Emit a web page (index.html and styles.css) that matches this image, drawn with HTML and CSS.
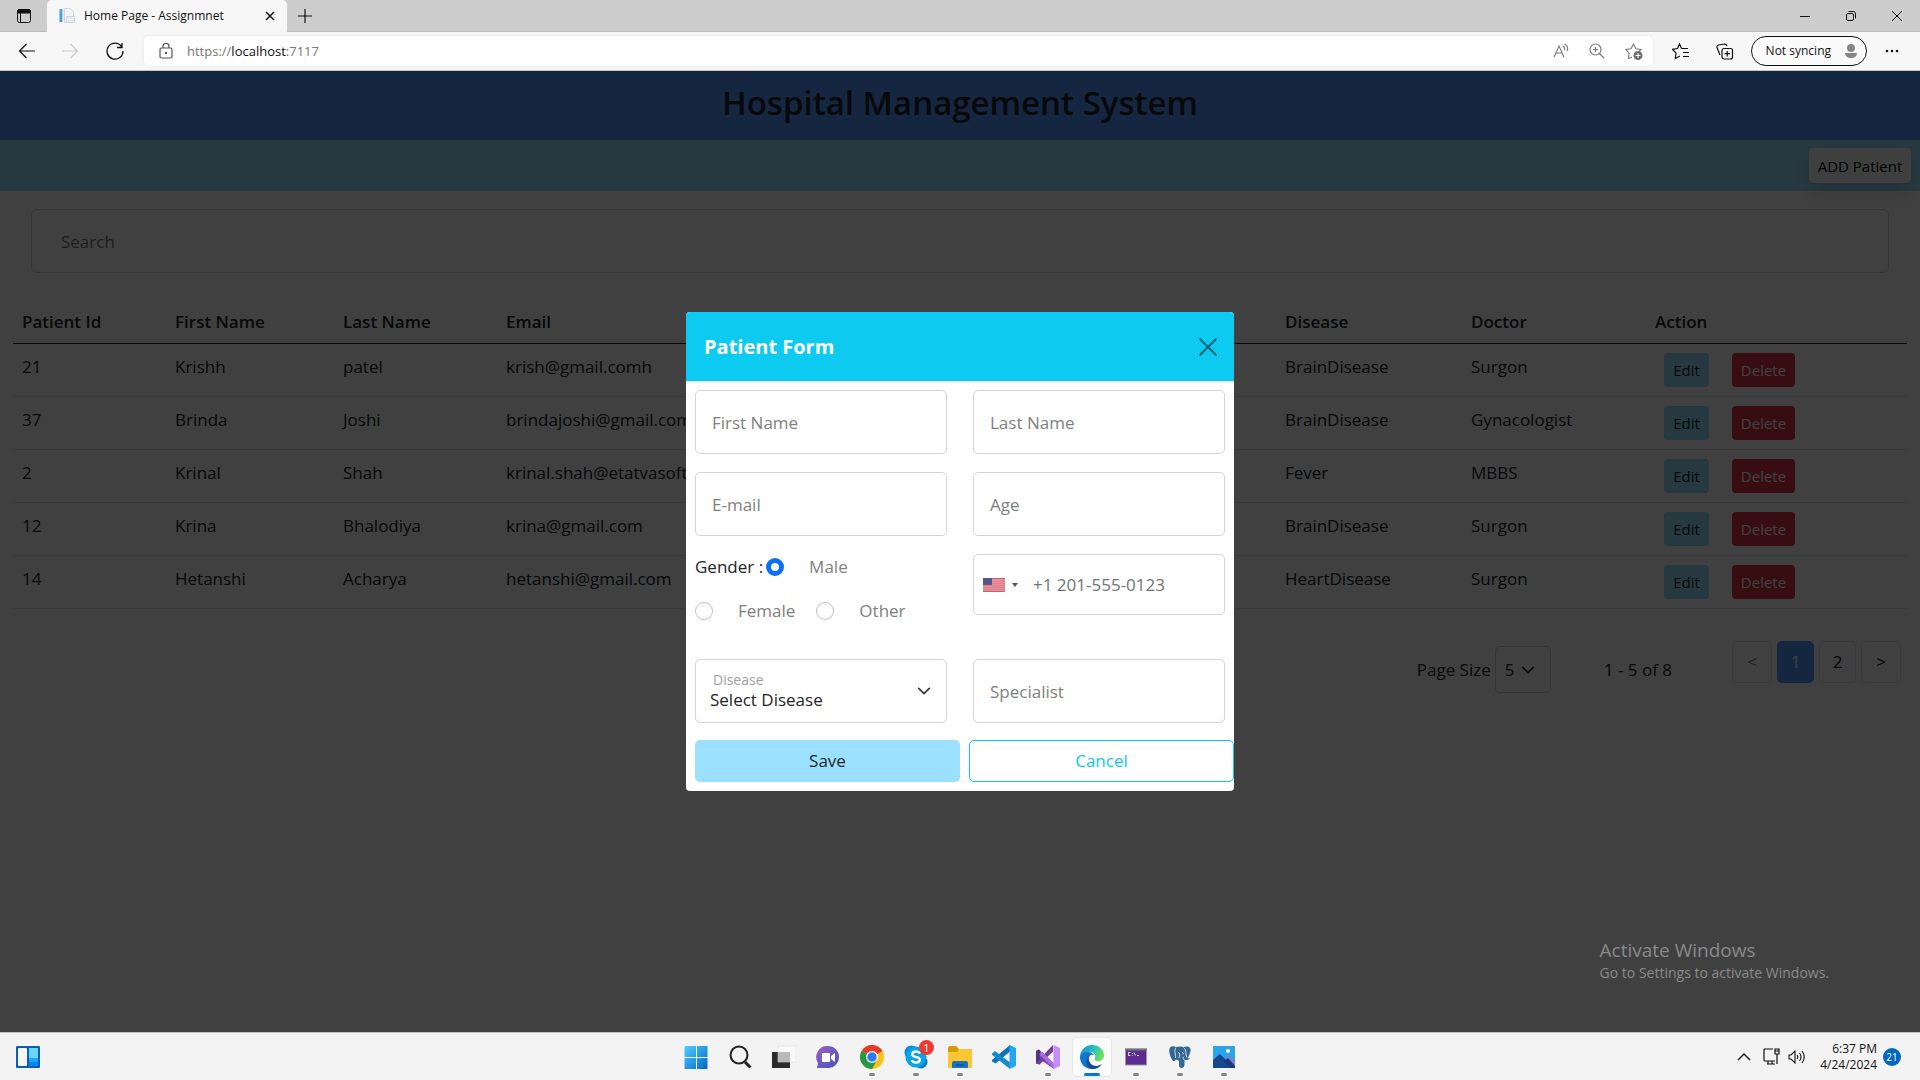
FILE: index.html
```html
<!DOCTYPE html>
<html lang="en">
<head>
<meta charset="utf-8">
<meta name="viewport" content="width=device-width, initial-scale=1">
<title>Home Page - Assignmnet</title>
<link rel="stylesheet" href="styles.css">
</head>
<body>
<header class="browser">
  <div class="tabstrip">
    <button class="icon-btn tab-menu" aria-label="Tab actions">
      <svg width="16" height="16" viewBox="0 0 16 16" fill="none" stroke="#111"><rect x="1.5" y="1.500" width="13" height="13" rx="2"/><path d="M1.500 5V3.500a2 2 0 0 1 2-2h9a2 2 0 0 1 2 2V5z" fill="#111"/><path d="M4.500 5v9.500"/></svg>
    </button>
    <div class="tab">
      <svg width="16" height="16" viewBox="0 0 16 16"><path d="M5.500.5h6l3 3v11h-9z" fill="#f1f3f7" stroke="#d2d6de"/><rect x=".5" y="1" width="3" height="13" fill="#4d9fd8"/><rect x="3.500" y="1" width="1" height="13" fill="#cfe3f3"/><path d="M7.500 8.500h8v6h-8z" fill="#e6e9f1" stroke="#d0d4df"/><path d="M8 11.500h7" stroke="#fff"/></svg>
      <span class="tab-title">Home Page - Assignmnet</span>
      <button class="icon-btn" aria-label="Close tab"><svg width="10" height="10" viewBox="0 0 10 10" stroke="#111" stroke-width="1.500"><path d="M1 1l8 8M9 1l-8 8"/></svg></button>
    </div>
    <button class="icon-btn new-tab" aria-label="New tab"><svg width="14" height="14" viewBox="0 0 14 14" stroke="#111" stroke-width="1.200"><path d="M7 0v14M0 7h14"/></svg></button>
    <div class="window-controls">
      <button class="icon-btn" aria-label="Minimize"><svg width="10" height="10" viewBox="0 0 10 10" stroke="#111"><path d="M0 5.500h10"/></svg></button>
      <button class="icon-btn" aria-label="Restore"><svg width="12" height="12" viewBox="0 0 12 12" fill="none" stroke="#111"><rect x="1.500" y="3.500" width="7" height="7" rx="1.500"/><path d="M3.500 1.500h5a2 2 0 0 1 2 2v5"/></svg></button>
      <button class="icon-btn" aria-label="Close"><svg width="12" height="12" viewBox="0 0 12 12" stroke="#111"><path d="M1 1l10 10M11 1L1 11"/></svg></button>
    </div>
  </div>
  <div class="toolbar">
    <nav class="nav-buttons">
      <button class="icon-btn" aria-label="Back"><svg width="18" height="16" viewBox="0 0 18 16" fill="none" stroke="#111" stroke-width="1.200"><path d="M17 8H1.500M8.500 1l-7 7 7 7"/></svg></button>
      <button class="icon-btn" aria-label="Forward"><svg width="18" height="16" viewBox="0 0 18 16" fill="none" stroke="#ccc" stroke-width="1.200"><path d="M0 8h15.500M8.500 1l7 7-7 7"/></svg></button>
      <button class="icon-btn" aria-label="Refresh"><svg width="18" height="18" viewBox="0 0 18 18" fill="none" stroke="#111" stroke-width="1.300"><path d="M15.500 4.500A8 8 0 1 0 17 9M16 1v4.500h-5"/></svg></button>
    </nav>
    <div class="address">
      <svg width="14" height="16" viewBox="0 0 14 16" fill="none" stroke="#555" stroke-width="1.200"><rect x="1" y="5" width="12" height="10" rx="1.500"/><path d="M4 5V3.500a3 3 0 0 1 6 0V5"/><circle cx="7" cy="10" r=".6" fill="#555"/></svg>
      <div class="url">https://<span>localhost</span>:7117</div>
      <div class="address-icons">
        <svg width="16" height="16" viewBox="0 0 16 16" fill="none" stroke="#777" stroke-width="1.100"><path d="M1 14L6 3l5 11M3 10h6M10 3c1.500 1 2 2.500 1.500 4M11.500 1c3 1.500 4 4 2.500 7"/></svg>
        <svg width="16" height="16" viewBox="0 0 16 16" fill="none" stroke="#777" stroke-width="1.200"><circle cx="6.500" cy="6.500" r="5.500"/><path d="M10.500 10.500l4.500 4.500M6.500 4v5M4 6.500h5"/></svg>
        <svg width="18" height="17" viewBox="0 0 18 17" fill="none" stroke="#777" stroke-width="1.100"><path d="M7 14l-3.500 1.500.5-5L1 6.500l5-.8L8.500 1 11 5.700l5 .8-2 2"/><circle cx="13" cy="12.500" r="4" fill="#666"/><path d="M13 10v5M10.500 12.500h5" stroke="#fff"/></svg>
      </div>
    </div>
    <div class="toolbar-right">
      <button class="icon-btn" aria-label="Favorites"><svg width="18" height="17" viewBox="0 0 18 17" fill="none" stroke="#111" stroke-width="1.200"><path d="M9.500 5.500L7.500 1 5.500 5.500l-5 .8L4 10l-.7 5.500L8 13M9.500 5.500H16M11 9.500h6M11 13.500h6"/></svg></button>
      <button class="icon-btn" aria-label="Collections"><svg width="18" height="17" viewBox="0 0 18 17" fill="none" stroke="#111" stroke-width="1.200"><rect x="6" y="5.500" width="10.500" height="10.500" rx="2"/><path d="M11.200 8v5.500M8.500 10.700H14M4 12L1 4.500Q.5 2.500 2.500 2L8.500 1q2 0 2.500 2"/></svg></button>
      <button class="profile">Not syncing <svg width="20" height="20" viewBox="0 0 20 20"><circle cx="10" cy="10" r="10" fill="#fafafa"/><circle cx="10" cy="7" r="4" fill="#868686"/><path d="M4 12h12c0 3-2.500 5-6 5s-6-2-6-5z" fill="#868686"/></svg></button>
      <button class="icon-btn" aria-label="Settings and more"><svg width="14" height="4" viewBox="0 0 14 4" fill="#111"><circle cx="2" cy="2" r="1.300"/><circle cx="7" cy="2" r="1.300"/><circle cx="12" cy="2" r="1.300"/></svg></button>
    </div>
  </div>
</header>

<main class="site">
  <h1 class="site-title">Hospital Management System</h1>
  <div class="actions-bar"><button class="btn btn-light">ADD Patient</button></div>
  <div class="search"><input type="search" placeholder="Search" aria-label="Search"></div>
  <div class="table-wrap">
    <table class="patients">
      <colgroup><col class="c-id"><col class="c-first"><col class="c-last"><col class="c-email"><col class="c-disease"><col class="c-doctor"><col class="c-action"></colgroup>
      <thead><tr><th>Patient Id</th><th>First Name</th><th>Last Name</th><th>Email</th><th>Disease</th><th>Doctor</th><th>Action</th></tr></thead>
      <tbody>
        <tr><td>21</td><td>Krishh</td><td>patel</td><td>krish@gmail.comh</td><td>BrainDisease</td><td>Surgon</td><td><div class="row-actions"><button class="btn btn-edit">Edit</button><button class="btn btn-delete">Delete</button></div></td></tr>
        <tr><td>37</td><td>Brinda</td><td>Joshi</td><td>brindajoshi@gmail.com</td><td>BrainDisease</td><td>Gynacologist</td><td><div class="row-actions"><button class="btn btn-edit">Edit</button><button class="btn btn-delete">Delete</button></div></td></tr>
        <tr><td>2</td><td>Krinal</td><td>Shah</td><td>krinal.shah@etatvasoft.</td><td>Fever</td><td>MBBS</td><td><div class="row-actions"><button class="btn btn-edit">Edit</button><button class="btn btn-delete">Delete</button></div></td></tr>
        <tr><td>12</td><td>Krina</td><td>Bhalodiya</td><td>krina@gmail.com</td><td>BrainDisease</td><td>Surgon</td><td><div class="row-actions"><button class="btn btn-edit">Edit</button><button class="btn btn-delete">Delete</button></div></td></tr>
        <tr><td>14</td><td>Hetanshi</td><td>Acharya</td><td>hetanshi@gmail.com</td><td>HeartDisease</td><td>Surgon</td><td><div class="row-actions"><button class="btn btn-edit">Edit</button><button class="btn btn-delete">Delete</button></div></td></tr>
      </tbody>
    </table>
  </div>
  <div class="pager">
    <div class="page-size"><label for="size">Page Size</label><select id="size"><option>5</option><option>10</option></select></div>
    <span class="range">1 - 5 of 8</span>
    <nav class="pages" aria-label="Pages"><button class="page arrow" disabled>&lt;</button><button class="page current">1</button><button class="page">2</button><button class="page arrow">&gt;</button></nav>
  </div>

  <div class="backdrop">
    <form class="modal" role="dialog" aria-labelledby="form-title">
      <div class="modal-head">
        <h2 id="form-title">Patient Form</h2>
        <button type="button" class="close" aria-label="Close"><svg width="18" height="18" viewBox="0 0 18 18" stroke="#06657a" stroke-width="2" stroke-linecap="round"><path d="M1 1l16 16M17 1L1 17"/></svg></button>
      </div>
      <div class="fields">
        <input class="field" type="text" placeholder="First Name" aria-label="First Name">
        <input class="field" type="text" placeholder="Last Name" aria-label="Last Name">
        <input class="field" type="email" placeholder="E-mail" aria-label="E-mail">
        <input class="field" type="text" placeholder="Age" aria-label="Age">
        <div class="gender" role="radiogroup" aria-label="Gender">
          <div class="gender-row"><span>Gender :</span><input type="radio" name="gender" id="male" checked><label for="male">Male</label></div>
          <div class="gender-row"><input type="radio" name="gender" id="female"><label for="female">Female</label><input type="radio" name="gender" id="other"><label for="other">Other</label></div>
        </div>
        <div class="phone">
          <svg width="22" height="14" viewBox="0 0 22 14"><rect width="22" height="14" fill="#e6929a"/><path d="M0 .5h22M0 13.500h22" stroke="#cf5b67"/><path d="M0 3.500h22M0 5.500h22M0 7.500h22M0 9.500h22M0 11.500h22" stroke="#d97580" stroke-width=".6"/><rect width="9" height="7" fill="#56568a"/></svg>
          <svg width="6" height="4" viewBox="0 0 6 4"><path d="M0 0h6L3 4z" fill="#555"/></svg>
          <input type="tel" placeholder="+1 201-555-0123" aria-label="Phone">
        </div>
        <div class="field disease">
          <label for="disease">Disease</label>
          <select id="disease"><option>Select Disease</option><option>Fever</option></select>
        </div>
        <input class="field" type="text" placeholder="Specialist" aria-label="Specialist">
      </div>
      <div class="modal-actions"><button type="button" class="save">Save</button><button type="button" class="cancel">Cancel</button></div>
    </form>
    <aside class="activate"><p class="activate-title">Activate Windows</p><p>Go to Settings to activate Windows.</p></aside>
  </div>
</main>

<footer class="taskbar">
  <button class="icon-btn widgets" aria-label="Widgets"><svg width="24" height="22" viewBox="0 0 24 22"><rect width="24" height="22" rx="1" fill="#0a5fb0"/><rect x="2" y="2" width="9" height="18" rx="1" fill="#f4f4f4"/><rect x="13" y="2" width="9" height="10" fill="#66d6ff"/><rect x="13" y="12" width="9" height="4" fill="#1ba4f8"/><rect x="13" y="16" width="9" height="4" fill="#0a84ee"/></svg></button>
  <div class="apps">
    <button class="app" aria-label="Start"><svg width="24" height="24" viewBox="0 0 24 24"><defs><linearGradient id="win" x1="0" y1="0" x2="1" y2="1"><stop stop-color="#4fd0ff"/><stop offset="1" stop-color="#0067c8"/></linearGradient></defs><path d="M1.500 1h10.500v11H.5V2zM13 1h10.500v11H13zM.5 13H12v11H.5zM13 13h10.500v11H13z" fill="url(#win)"/></svg></button>
    <button class="app" aria-label="Search"><svg width="24" height="24" viewBox="0 0 24 24" fill="none" stroke="#222"><circle cx="11" cy="10" r="8.500" stroke-width="2"/><path d="M17 17l5.500 5.500" stroke-width="3"/></svg></button>
    <button class="app" aria-label="Task view"><svg width="24" height="24" viewBox="0 0 24 24"><rect y="7" width="18" height="16" fill="#2b2b2b"/><rect x="6" y="1" width="18" height="16" fill="#f9f9f9" stroke="#ddd" stroke-width=".6"/><rect x="6" y="7" width="12" height="10" fill="#b9b9b9"/></svg></button>
    <button class="app" aria-label="Chat"><svg width="24" height="24" viewBox="0 0 24 24"><defs><linearGradient id="chat" x1="0" y1="0" x2="1" y2="1"><stop stop-color="#9a62b8"/><stop offset="1" stop-color="#4650c8"/></linearGradient></defs><path d="M12 1a11 11 0 1 1 0 22H1l1-5A11 11 0 0 1 12 1z" fill="url(#chat)"/><rect x="6" y="8" width="8" height="9" rx="1" fill="#fff"/><path d="M15 11l4-3v9l-4-3z" fill="#fff"/></svg></button>
    <button class="app running" aria-label="Chrome"><svg width="24" height="24" viewBox="0 0 24 24"><circle cx="12" cy="12" r="12" fill="#fbc116"/><path d="M12 12L1.600 6A12 12 0 0 1 22.400 6z" fill="#e33b2e"/><path d="M12 12L1.600 6A12 12 0 0 0 12 24l5.200-9z" fill="#279847"/><circle cx="12" cy="12" r="6" fill="#fff"/><circle cx="12" cy="12" r="4.700" fill="#2a7cf0"/></svg></button>
    <button class="app running" aria-label="Skype"><svg width="24" height="24" viewBox="0 0 24 24"><circle cx="7.500" cy="7.500" r="7" fill="#0a8dd8"/><circle cx="17" cy="17" r="6.500" fill="#0578c9"/><circle cx="12" cy="12" r="10.500" fill="#0aa3e4"/><path d="M16 8.500c-1-1.700-2.300-2-4-2-2.200 0-3.700 1-3.700 2.700 0 4 7.600 1.800 7.600 5.400 0 2-1.700 3-4 3-2 0-3.400-.8-4.200-2.300" fill="none" stroke="#fff" stroke-width="2.400"/></svg><span class="badge">1</span></button>
    <button class="app running" aria-label="File Explorer"><svg width="24" height="24" viewBox="0 0 24 24"><path d="M0 3q0-2 2-2h6l3 3v5H0z" fill="#d89a00"/><path d="M0 7h9l3-3h12v19H0z" fill="#fdc733"/><path d="M4 23v-5q0-2 2-2h12q2 0 2 2v5z" fill="#1673c2"/><path d="M8 20h8" stroke="#0a4f92" stroke-width="1.500"/></svg></button>
    <button class="app" aria-label="Visual Studio Code"><svg width="24" height="24" viewBox="0 0 24 24"><path d="M18 0v6.500L3.500 18.500 0 16.500v-1.500z" fill="#0a74b8"/><path d="M0 8.500L3 6l15 11.500V24L0 9.800z" fill="#1688d0"/><path d="M17.500 0L24 3v18l-6.500 3z" fill="#27a4f2"/></svg></button>
    <button class="app running" aria-label="Visual Studio"><svg width="24" height="24" viewBox="0 0 24 24"><path d="M0 6l3-1.500L18 19v5L4 14.500v3L0 19z" fill="#7a4ab0"/><path d="M0 6l3-1.500 1 1v12L3 19.500 0 18z" fill="#53357e"/><path d="M17 0v6.500L3.500 19.500 0 18 14 3z" fill="#6d3fa0"/><path d="M6 6.500l12 12V24L3 9z" fill="#a86be0"/><path d="M17.500 0L24 3v18l-6.500 3z" fill="#c48df7"/></svg></button>
    <button class="app running active" aria-label="Edge"><svg width="24" height="24" viewBox="0 0 24 24"><defs><linearGradient id="edge" x1="0" y1="0" x2="1" y2=".4"><stop stop-color="#1487d9"/><stop offset=".6" stop-color="#2bbfc0"/><stop offset="1" stop-color="#6ce056"/></linearGradient></defs><path d="M0 11C1 4 6 0 12 0c7 0 12 5 12 10 0 4-3 6-6 6s-4-1-3-3c1-3-1-6-5-6C6 7 2 9 0 11z" fill="url(#edge)"/><path d="M0 12c0-3 4-5 8-5 3 0 5 1.500 6 3-4-1-6 2-5 6 1 3 4 5 7 5 2 0 4-.5 6-2-2 3-6 5-10 5C5 24 0 19 0 12z" fill="#0f75cf"/><path d="M9.500 11C7 15 10 21 16 21c2 0 4-.6 6-2-2 3-6 5-10 5-5 0-8-9-2.500-13z" fill="#124a94"/></svg></button>
    <button class="app running" aria-label="Command Prompt"><svg width="24" height="24" viewBox="0 0 24 24"><rect x="1.500" y="4" width="21" height="16" fill="#5b2b90" stroke="#999"/><path d="M1 4.500h22" stroke="#777" stroke-width="2"/><path d="M6.500 7.500h-2v3h2M8.500 8v.8M8.500 9.800v.8M10 7.500l1.500 3M13 10.500h2" fill="none" stroke="#fff" stroke-width=".8"/></svg></button>
    <button class="app running" aria-label="PostgreSQL"><svg width="24" height="24" viewBox="0 0 24 24"><path d="M8 2C4 0 1 2 1.200 6c.2 3 2 8 3.500 9.500 1 1 2.300.5 3.300-1l1.500.5c2 .5 1.500 2 1.500 5 0 2 1 3 2.500 3s3-1 3-4v-4c2 0 5 0 6-1.500-1.500.2-2.500 0-2.500-.7C22 9 23.500 5 22 3c-2-2.500-5-1.500-6.500-1-2-.7-5-.7-7.500 0z" fill="#336791"/><path d="M8 2.500C5.500 6 8 9 7.500 13M15.500 2.500C19 5 17 9 19 12.500M10 8c2-1 2 2 1 5M14 7.500c1.500 0 1.500 1 1 2M16.500 14.500c-2 0-1.500-2-.5-3" fill="none" stroke="#e5edf3" stroke-width=".9"/></svg></button>
    <button class="app running" aria-label="Photos"><svg width="24" height="24" viewBox="0 0 24 24"><rect x="1" y="1" width="22" height="22" rx="1" fill="#2ba4ea"/><path d="M12 14l6-4 5 5v8H12z" fill="#6a86d8"/><path d="M1 15l7-6 14 14H1z" fill="#15488c"/><path d="M12 16l4-3 7 8v2H18z" fill="#1a3a78"/><circle cx="16" cy="6" r="2" fill="#fff"/></svg></button>
  </div>
  <div class="tray">
    <svg width="14" height="8" viewBox="0 0 14 8" fill="none" stroke="#111" stroke-width="1.400"><path d="M1 7l6-6 6 6"/></svg>
    <svg class="net" width="17" height="17" viewBox="0 0 17 17" fill="none" stroke="#111" stroke-width="1.200"><path d="M10 1H2Q1 1 1 2v10q0 1 1 1h10M5 13v3M9 13v3M4 16h8M12 1h4v5h-4zM14 6v10M12 3h4"/></svg>
    <svg width="17" height="16" viewBox="0 0 17 16" fill="none" stroke="#111" stroke-width="1.100"><path d="M1 6v4h2l4 4V2L3 6zM9 6q1.500 2 0 4M11.500 4q3 4 0 8M14 2q4.500 6 0 12"/></svg>
    <div class="clock">6:37 PM<br>4/24/2024</div>
    <span class="count">21</span>
  </div>
</footer>
</body>
</html>
```
FILE: styles.css
```css
* { box-sizing: border-box; }
body {
  margin: 0;
  min-height: 100vh;
  display: flex;
  flex-direction: column;
  font: 17px/26px "Open Sans", "Noto Sans", sans-serif;
  color: #212529;
  background: #fff;
}
button, input, select { font: inherit; color: inherit; margin: 0; }
button { padding: 0; cursor: pointer; }
svg { display: block; flex: none; }
h1, h2, p { margin: 0; }
.icon-btn { border: 0; background: none; display: flex; align-items: center; justify-content: center; }

/* Browser frame */
.browser { font-size: 12px; line-height: 16px; color: #111; }
.tabstrip { display: flex; align-items: stretch; height: 32px; background: #cdcdcd; box-shadow: inset 0 -1px #bdbdbd; }
.tab-menu { width: 47px; }
.tab { width: 240px; display: flex; align-items: center; gap: 9px; padding: 0 12px; background: #f7f7f7; border-radius: 5px 5px 0 0; }
.tab-title { flex: 1; }
.new-tab { width: 36px; }
.window-controls { margin-left: auto; display: flex; }
.window-controls .icon-btn { width: 46px; }
.toolbar { display: flex; align-items: center; height: 39px; padding-right: 21px; background: #f7f7f7; border-bottom: 1px solid #c4c8c4; }
.nav-buttons { display: flex; gap: 26px; padding: 0 20px 0 18px; }
.address { flex: 1; height: 30px; display: flex; align-items: center; gap: 14px; padding: 0 10px 0 15px; background: #fff; border-radius: 5px; box-shadow: 0 0 3px #e2e2e2; font-size: 13px; }
.url { flex: 1; color: #767676; }
.url span { color: #111; }
.address-icons { display: flex; gap: 20px; }
.toolbar-right { display: flex; align-items: center; gap: 26px; padding-left: 19px; }
.profile { height: 30px; display: flex; align-items: center; gap: 10px; padding: 0 5px 0 14px; margin: 0 -8px 0 -9px; border: 1px solid #111; border-radius: 15px; background: #fafafa; font-size: 12px; }

/* Site */
.site { flex: 1; position: relative; }
.site-title { height: 69px; padding-bottom: 6px; background: #5598ff; text-align: center; font-size: 33px; line-height: 63px; font-weight: 600; }
.actions-bar { height: 51px; display: flex; align-items: center; justify-content: flex-end; padding: 0 9px; background: #9be1ff; }
.btn { border: 0; border-radius: 4px; font-size: 15px; line-height: 24px; white-space: nowrap; }
.btn-light { width: 102px; height: 35px; background: #f8f9fa; color: #000; box-shadow: 0 9px 18px rgba(0, 0, 0, .15); }
.search { padding: 18px 31px 0; }
.search input { width: 100%; height: 64px; padding: 0 29px; border: 1px solid #ced4da; border-radius: 6px; background: #fff; outline: 0; }
.search input::placeholder { color: #777; opacity: 1; }
.table-wrap { padding: 26px 13px 0; }
.patients { width: 100%; table-layout: fixed; border-collapse: collapse; }
.patients th, .patients td { padding: 10px 9px 8px; text-align: left; vertical-align: top; border-bottom: 1px solid #dee2e6; }
.patients th { font-weight: 600; border-color: #212529; }
.patients td { height: 53px; white-space: nowrap; }
.patients td:last-child { padding: 9px; }
.c-id { width: 153px; }
.c-first { width: 168px; }
.c-last { width: 163px; }
.c-disease { width: 186px; }
.c-doctor { width: 184px; }
.c-action { width: 261px; }
.row-actions { display: flex; gap: 23px; padding-left: 9px; }
.row-actions .btn { height: 34px; }
.btn-edit { width: 45px; background: #9be1ff; color: #212529; }
.btn-delete { width: 63px; background: #dc3545; color: #fff; }
.pager { display: flex; justify-content: flex-end; padding: 32px 19px 0 0; }
.page-size { display: flex; align-items: center; gap: 4px; padding-top: 5px; }
select { appearance: none; background: no-repeat url("data:image/svg+xml,%3Csvg xmlns='http://www.w3.org/2000/svg' viewBox='0 0 16 16'%3E%3Cpath fill='none' stroke='%23343a40' stroke-linecap='round' stroke-linejoin='round' stroke-width='2' d='m2 5 6 6 6-6'/%3E%3C/svg%3E"); outline: 0; }
.page-size select { width: 56px; height: 47px; padding: 0 9px; border: 1px solid #ced4da; border-radius: 5px; background-size: 14px; background-position: 25px center; }
.range { padding: 16px 60px 0 53px; }
.pages { display: flex; gap: 5px; }
.page { width: 37px; height: 42px; border: 1px solid #dee2e6; border-radius: 5px; background: #fff; color: #111; }
.page.arrow { width: 40px; }
.page:disabled { color: #888; }
.page.current { border-color: #5598ff; background: #5598ff; color: #fff; }

/* Patient dialog */
.backdrop { position: absolute; inset: 0; display: flex; justify-content: center; align-items: flex-start; background: rgba(0, 0, 0, .75); padding: 241px 16px 16px; }
.modal { width: 548px; background: #fff; border-radius: 4px; overflow: hidden; }
.modal-head { height: 70px; display: flex; align-items: center; justify-content: space-between; padding: 0 17px 0 18px; background: #0dcaf0; border-bottom: 1px solid #dee2e6; color: #fff; }
.modal-head h2 { font-size: 20px; line-height: 32px; font-weight: 700; }
.close { border: 0; background: none; }
.fields { display: grid; grid-template-columns: repeat(2, minmax(0, 1fr)); gap: 18px 26px; padding: 8px 9px 17px; }
.field { width: 100%; height: 64px; padding: 0 16px; border: 1px solid #ced4da; border-radius: 5px; outline: 0; }
.field::placeholder { color: #808080; opacity: 1; }
.gender { height: 87px; color: #808080; display: flex; flex-direction: column; gap: 18px; }
.gender-row { display: flex; align-items: center; }
.gender-row span { color: #212529; padding-right: 3px; }
.gender-row label { padding: 0 21px 0 25px; }
.gender input { appearance: none; width: 18px; height: 18px; border: 1px solid #bfbfbf; border-radius: 50%; background: #fff; }
.gender input:checked { border: 5px solid #0d6efd; }
.phone { height: 61px; display: flex; align-items: center; padding: 0 9px; gap: 7px; border: 1px solid #ced4da; border-radius: 5px; }
.phone input { flex: 1; min-width: 0; border: 0; outline: 0; padding: 0 8px; }
.phone input::placeholder { color: #6c757d; opacity: 1; }
.disease { position: relative; padding: 0; }
.disease label { position: absolute; left: 17px; top: 7px; font-size: 14px; color: #a0a0a0; pointer-events: none; }
.disease select { width: 100%; height: 62px; border: 0; border-radius: 5px; padding: 18px 14px 0; background-size: 14px; background-position: right 15px center; }
.modal-actions { display: grid; grid-template-columns: 1fr 1fr; gap: 9px; padding: 0 0 9px 9px; }
.save, .cancel { height: 42px; border-radius: 5px; }
.save { border: 0; background: #9be1ff; }
.cancel { border: 1px solid #0dcaf0; background: #fff; color: #0dcaf0; }
.activate { position: absolute; right: 91px; bottom: 49px; font-size: 14px; line-height: 20px; color: #8a8a8a; }
.activate-title { font-size: 19px; line-height: 26px; }

/* Taskbar */
.taskbar { height: 48px; display: grid; grid-template-columns: 1fr auto 1fr; align-items: center; background: #f3f3f3; border-top: 1px solid #c4c4c4; font-size: 12px; line-height: 16px; color: #111; }
.widgets { justify-self: start; padding-left: 16px; }
.apps { display: flex; gap: 4px; }
.app { position: relative; width: 40px; height: 40px; display: flex; align-items: center; justify-content: center; border: 1px solid transparent; border-radius: 5px; background: none; }
.app.active { background: #fbfbfb; border-color: #e6e6e6; }
.app.running::after { content: ""; position: absolute; bottom: 0; left: 50%; margin-left: -3px; width: 6px; height: 3px; border-radius: 2px; background: #868686; }
.app.active::after { width: 16px; margin-left: -8px; background: #0078d4; }
.badge { position: absolute; top: 2px; right: 1px; width: 15px; height: 15px; border-radius: 50%; background: #f03a30; color: #fff; font-size: 11px; line-height: 15px; }
.tray { justify-self: end; display: flex; align-items: center; padding-right: 19px; }
.net { margin: 0 8px 0 12px; }
.clock { width: 72px; text-align: right; font-size: 12px; }
.count { width: 18px; height: 18px; margin-left: 6px; border-radius: 50%; background: #0067c0; color: #fff; text-align: center; font-size: 10px; line-height: 18px; }
```
